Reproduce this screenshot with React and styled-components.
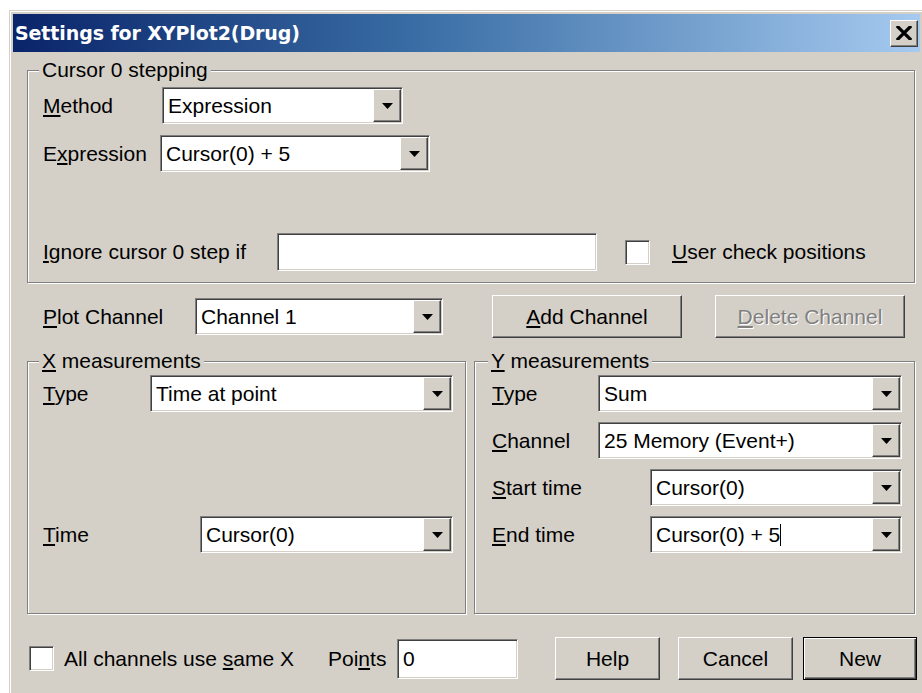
import React from 'react';
import styled, { createGlobalStyle, css } from 'styled-components';

const GlobalStyle = createGlobalStyle`
  html, body {
    margin: 0;
    padding: 0;
    background: #fff;
    overflow: hidden;
  }
  body {
    font-family: "Liberation Sans", Arial, sans-serif;
    font-size: 21px;
    color: #000;
  }
`;

// classic 3D bevels
const sunken = css`
  border: 1px solid;
  border-color: #808080 #fff #fff #808080;
  box-shadow: inset 1px 1px 0 #404040, inset -1px -1px 0 #d4d0c8;
`;

const raised = css`
  border: 1px solid;
  border-color: #fff #404040 #404040 #fff;
  box-shadow: inset -1px -1px 0 #808080, inset 1px 1px 0 #d4d0c8;
`;

const Window = styled.div`
  box-sizing: border-box;
  width: 915px;
  height: 700px;
  margin: 10px 0 0 9px;
  padding: 3px;
  background: #d4d0c8;
  border: 1px solid #d4d0c8;
  box-shadow: inset 1px 1px 0 #fff;
`;

const TitleBar = styled.div`
  height: 38px;
  display: flex;
  align-items: center;
  justify-content: space-between;
  padding: 0 2px;
  background: linear-gradient(to right, #0a246a 0%, #3a6ea5 45%, #a6caf0 100%);
`;

const Title = styled.span`
  font-family: "DejaVu Sans", Verdana, sans-serif;
  font-weight: 700;
  font-size: 19px;
  color: #fff;
  letter-spacing: -0.1px;
`;

const CloseButton = styled.span`
  box-sizing: border-box;
  width: 28px;
  height: 27px;
  display: flex;
  align-items: center;
  justify-content: center;
  background: #d4d0c8;
  ${raised};
`;

const Body = styled.div`
  padding: 7px 0 0 14px;
  display: flex;
  flex-direction: column;
`;

const Group = styled.fieldset`
  box-sizing: border-box;
  margin: 0;
  min-width: 0;
  width: ${p => p.$width}px;
  padding: ${p => p.$padding};
  border: 1px solid #808080;
  box-shadow: inset 1px 1px 0 #fff, 1px 1px 0 #fff;
`;

const Legend = styled.legend`
  margin-left: -4px;
  padding: 0 3px;
  font-size: 21px;
  line-height: 22px;
  background: #d4d0c8;
`;

const Row = styled.div`
  display: flex;
  align-items: center;
  height: ${p => p.$height || 37}px;
  margin-top: ${p => p.$top || 0}px;
  padding-left: ${p => p.$indent || 0}px;
`;

const Label = styled.span`
  flex: none;
  width: ${p => (p.$width ? `${p.$width}px` : 'auto')};
  margin-left: ${p => p.$gap || 0}px;
  white-space: nowrap;
  color: ${p => p.$muted ? '#808080' : '#000'};
`;

const U = styled.span`
  text-decoration: underline;
  text-underline-offset: 2px;
`;

const Combo = styled.div`
  box-sizing: border-box;
  flex: none;
  display: flex;
  width: ${p => p.$width}px;
  height: 37px;
  padding: 1px;
  background: #fff;
  ${sunken};
`;

const ComboText = styled.span`
  flex: 1;
  display: flex;
  align-items: center;
  padding-left: 4px;
  white-space: nowrap;
  overflow: hidden;
`;

const Caret = styled.span`
  display: inline-block;
  width: 0;
  height: 22px;
  border-left: 1px solid #000;
`;

const DropButton = styled.span`
  box-sizing: border-box;
  flex: none;
  width: 28px;
  display: flex;
  align-items: center;
  justify-content: center;
  background: #d4d0c8;
  ${raised};
`;

const TextBox = styled.div`
  box-sizing: border-box;
  flex: none;
  display: flex;
  align-items: center;
  width: ${p => p.$width}px;
  height: ${p => p.$height || 38}px;
  margin-left: ${p => p.$gap || 0}px;
  padding-left: 5px;
  background: #fff;
  ${sunken};
`;

const Check = styled.span`
  box-sizing: border-box;
  flex: none;
  width: 25px;
  height: 25px;
  margin-left: ${p => p.$gap || 0}px;
  background: #fff;
  ${sunken};
`;

const Button = styled.button`
  box-sizing: border-box;
  flex: none;
  width: ${p => p.$width}px;
  height: 43px;
  margin-left: ${p => p.$gap || 0}px;
  padding: 0;
  font: 21px "Liberation Sans", Arial, sans-serif;
  color: #000;
  background: #d4d0c8;
  ${raised};

  &:disabled {
    color: #808080;
    text-shadow: 1px 1px 0 #fff;
  }

  ${p => p.$default && css`
    border: 1px solid #000;
    box-shadow: inset 1px 1px 0 #fff, inset -1px -1px 0 #404040, inset -2px -2px 0 #808080;
  `}
`;

const Columns = styled.div`
  display: flex;
  gap: 8px;
  margin-top: 12px;
`;

const FieldGrid = styled.div`
  display: grid;
  grid-template-rows: repeat(4, 37px);
  row-gap: 10px;
  align-items: center;
`;

const Arrow = () => (
  <svg width="11" height="6" viewBox="0 0 11 6">
    <polygon points="0,0 11,0 5.5,6" fill="#000" />
  </svg>
);

const CloseGlyph = () => (
  <svg width="16" height="14" viewBox="0 0 16 14">
    <path d="M2 1 L14 13 M14 1 L2 13" stroke="#000" strokeWidth="3.2" strokeLinecap="square" />
  </svg>
);

const Select = ({ width, children }) => (
  <Combo $width={width}>
    <ComboText>{children}</ComboText>
    <DropButton><Arrow /></DropButton>
  </Combo>
);

const Field = ({ label, labelWidth, width, children, row }) => (
  <Row style={row ? { gridRow: row } : undefined}>
    <Label $width={labelWidth}>{label}</Label>
    <Select width={width}>{children}</Select>
  </Row>
);

export default function App() {
  return (
    <>
      <GlobalStyle />
      <Window>
        <TitleBar>
          <Title>Settings for XYPlot2(Drug)</Title>
          <CloseButton><CloseGlyph /></CloseButton>
        </TitleBar>

        <Body>
          <Group $width={888} $padding="6px 0 11px 15px">
            <Legend>Cursor 0 stepping</Legend>
            <Field label={<><U>M</U>ethod</>} labelWidth={119} width={241}>Expression</Field>
            <Row $top={11}>
              <Label $width={117}>E<U>x</U>pression</Label>
              <Select width={270}>Cursor(0) + 5</Select>
            </Row>
            <Row $top={61} $height={38}>
              <Label $width={234}><U>I</U>gnore cursor 0 step if</Label>
              <TextBox $width={320} />
              <Check $gap={28} />
              <Label $gap={22}><U>U</U>ser check positions</Label>
            </Row>
          </Group>

          <Row $top={12} $height={43} $indent={16}>
            <Label $width={152}><U>P</U>lot Channel</Label>
            <Select width={248}>Channel 1</Select>
            <Button $width={190} $gap={49}><U>A</U>dd Channel</Button>
            <Button $width={190} $gap={33} disabled><U>D</U>elete Channel</Button>
          </Row>

          <Columns>
            <Group $width={439} $padding="3px 0 60px 15px">
              <Legend><U>X</U> measurements</Legend>
              <FieldGrid>
                <Field label={<><U>T</U>ype</>} labelWidth={107} width={303}>Time at point</Field>
                <Field row={4} label={<><U>T</U>ime</>} labelWidth={157} width={253}>Cursor(0)</Field>
              </FieldGrid>
            </Group>
            <Group $width={441} $padding="3px 0 60px 17px">
              <Legend><U>Y</U> measurements</Legend>
              <FieldGrid>
                <Field label={<><U>T</U>ype</>} labelWidth={106} width={304}>Sum</Field>
                <Field label={<><U>C</U>hannel</>} labelWidth={106} width={304}>25 Memory (Event+)</Field>
                <Field label={<><U>S</U>tart time</>} labelWidth={158} width={252}>Cursor(0)</Field>
                <Field label={<><U>E</U>nd time</>} labelWidth={158} width={252}>Cursor(0) + 5<Caret /></Field>
              </FieldGrid>
            </Group>
          </Columns>

          <Row $top={23} $height={43}>
            <Check $gap={2} />
            <Label $width={264} $gap={10}>All channels use <U>s</U>ame X</Label>
            <Label $width={69}>Poi<U>n</U>ts</Label>
            <TextBox $width={121} $height={40}>0</TextBox>
            <Button $width={105} $gap={37}>Help</Button>
            <Button $width={115} $gap={18}>Cancel</Button>
            <Button $width={114} $gap={10} $default>New</Button>
          </Row>
        </Body>
      </Window>
    </>
  );
}
